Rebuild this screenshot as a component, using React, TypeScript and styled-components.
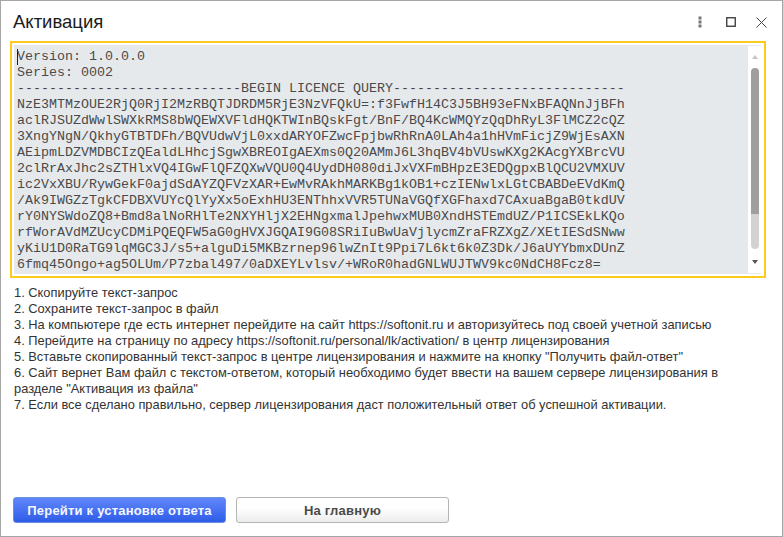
import React from "react";
import styled, { createGlobalStyle } from "styled-components";

const Global = createGlobalStyle`
  html, body { margin: 0; padding: 0; background: #fff; }
  body { font-family: "Liberation Sans", Arial, sans-serif; }
`;

const Window = styled.div`
  box-sizing: border-box;
  width: 783px;
  height: 537px;
  border: 1px solid #a6a6a6;
  background: #fff;
  display: flex;
  flex-direction: column;
`;

const TitleBar = styled.header`
  box-sizing: border-box;
  height: 40px;
  flex: none;
  display: flex;
  align-items: center;
  padding: 2px 5px 0 12px;
`;

const Title = styled.h1`
  flex: 1;
  margin: 0;
  font-size: 18.5px;
  font-weight: 400;
  color: #1a1a1a;
`;

const WindowButton = styled.button`
  width: 31px;
  height: 24px;
  padding: 0;
  border: 0;
  background: none;
  display: flex;
  align-items: center;
  justify-content: center;
`;

const QueryFrame = styled.div`
  box-sizing: border-box;
  margin: 0 16px 0 9px;
  height: 237px;
  flex: none;
  border: 2px solid #fdcb1d;
  padding: 2px 3px 2px 2px;
  display: flex;
  background: #fff;
`;

const QueryBox = styled.div`
  flex: 1;
  min-width: 0;
  display: flex;
  background: #e6e9ec;
  padding: 1px 0;
`;

const QueryText = styled.pre`
  flex: 1;
  min-width: 0;
  margin: 0;
  padding: 3px 0 0 3px;
  font-family: "Liberation Mono", "Courier New", monospace;
  font-size: 13.33px;
  line-height: 16px;
  color: #4a4a4a;
  overflow: hidden;
  position: relative;
`;

const Caret = styled.i`
  position: absolute;
  left: 3px;
  top: 3px;
  width: 1px;
  height: 16px;
  background: #222;
`;

const ScrollBar = styled.div`
  width: 13px;
  flex: none;
  display: flex;
  flex-direction: column;
  align-items: center;
  background: #fff;
`;

const Arrow = styled.div<{ $down?: boolean }>`
  height: 22px;
  flex: none;
  display: flex;
  align-items: center;
  justify-content: center;
  &::before {
    content: "";
    border-left: 3.5px solid transparent;
    border-right: 3.5px solid transparent;
    ${(p) =>
      p.$down
        ? "border-top: 4px solid #555;"
        : "border-bottom: 4px solid #c4c4c4;"}
  }
`;

const Track = styled.div`
  flex: 1;
  width: 8px;
  display: flex;
`;

const Thumb = styled.div`
  width: 8px;
  height: 181px;
  border-radius: 4px;
  background: linear-gradient(#9e9e9e 0%, #9e9e9e 80.5%, #d2d2d2 80.5%, #d2d2d2 100%);
`;

const Steps = styled.ol`
  list-style: none;
  margin: 7px 0 0;
  padding: 0 13px;
  font-size: 12.87px;
  line-height: 16px;
  color: #333;
  flex: 1;
`;

const Footer = styled.footer`
  flex: none;
  display: flex;
  gap: 10px;
  padding: 0 12px 13px;
`;

const ActionButton = styled.button<{ $primary?: boolean }>`
  box-sizing: border-box;
  width: 213px;
  height: 26px;
  padding: 0;
  border-radius: 3px;
  font-family: "Liberation Sans", Arial, sans-serif;
  font-size: 13px;
  font-weight: 700;
  letter-spacing: 0.2px;
  ${(p) =>
    p.$primary
      ? `border: 1px solid #6b8fd8;
         background: linear-gradient(#5f86fb, #2f5de8);
         color: #f4f7ff;`
      : `border: 1px solid #b5b5b5;
         background: linear-gradient(#ffffff 40%, #ececec);
         color: #4a4a4a;`}
`;

const lines = [
  "Version: 1.0.0.0",
  "Series: 0002",
  "----------------------------BEGIN LICENCE QUERY-----------------------------",
  "NzE3MTMzOUE2RjQ0RjI2MzRBQTJDRDM5RjE3NzVFQkU=:f3FwfH14C3J5BH93eFNxBFAQNnJjBFh",
  "aclRJSUZdWwlSWXkRMS8bWQEWXVFldHQKTWInBQskFgt/BnF/BQ4KcWMQYzQqDhRyL3FlMCZ2cQZ",
  "3XngYNgN/QkhyGTBTDFh/BQVUdwVjL0xxdARYOFZwcFpjbwRhRnA0LAh4a1hHVmFicjZ9WjEsAXN",
  "AEipmLDZVMDBCIzQEaldLHhcjSgwXBREOIgAEXms0Q20AMmJ6L3hqBV4bVUswKXg2KAcgYXBrcVU",
  "2clRrAxJhc2sZTHlxVQ4IGwFlQFZQXwVQU0Q4UydDH080diJxVXFmBHpzE3EDQgpxBlQCU2VMXUV",
  "ic2VxXBU/RywGekF0ajdSdAYZQFVzXAR+EwMvRAkhMARKBg1kOB1+czIENwlxLGtCBABDeEVdKmQ",
  "/Ak9IWGZzTgkCFDBXVUYcQlYyXx5oExhHU3ENThhxVVR5TUNaVGQfXGFhaxd7CAxuaBgaB0tkdUV",
  "rY0NYSWdoZQ8+Bmd8alNoRHlTe2NXYHljX2EHNgxmalJpehwxMUB0XndHSTEmdUZ/P1ICSEkLKQo",
  "rfWorAVdMZUcyCDMiPQEQFW5aG0gHVXJGQAI9G08SRiIuBwUaVjlycmZraFRZXgZ/XEtIESdSNww",
  "yKiU1D0RaTG9lqMGC3J/s5+alguDi5MKBzrnep96lwZnIt9Ppi7L6kt6k0Z3Dk/J6aUYYbmxDUnZ",
  "6fmq45Ongo+ag5OLUm/P7zbal497/0aDXEYLvlsv/+WRoR0hadGNLWUJTWV9kc0NdCH8Fcz8=",
];

const steps = [
  "1. Скопируйте текст-запрос",
  "2. Сохраните текст-запрос в файл",
  "3. На компьютере где есть интернет перейдите на сайт https://softonit.ru и авторизуйтесь под своей учетной записью",
  "4. Перейдите на страницу по адресу https://softonit.ru/personal/lk/activation/ в центр лицензирования",
  '5. Вставьте скопированный текст-запрос в центре лицензирования и нажмите на кнопку "Получить файл-ответ"',
  '6. Сайт вернет Вам файл с текстом-ответом, который необходимо будет ввести на вашем сервере лицензирования в разделе "Активация из файла"',
  "7. Если все сделано правильно, сервер лицензирования даст положительный ответ об успешной активации.",
];

export default function App() {
  return (
    <>
      <Global />
      <Window>
        <TitleBar>
          <Title>Активация</Title>
          <WindowButton aria-label="Меню">
            <svg width="4" height="12" viewBox="0 0 4 12">
              <g fill="#777">
                <rect x="0.5" y="0.5" width="3" height="3" />
                <rect x="0.5" y="4.5" width="3" height="3" />
                <rect x="0.5" y="8.5" width="3" height="3" />
              </g>
            </svg>
          </WindowButton>
          <WindowButton aria-label="Развернуть">
            <svg width="10" height="10" viewBox="0 0 10 10">
              <rect x="0.75" y="0.75" width="8.5" height="8.5" fill="none" stroke="#333" strokeWidth="1.3" />
            </svg>
          </WindowButton>
          <WindowButton aria-label="Закрыть">
            <svg width="11" height="11" viewBox="0 0 11 11">
              <path d="M0.5 0.5 10.5 10.5M10.5 0.5 0.5 10.5" stroke="#444" strokeWidth="1" fill="none" />
            </svg>
          </WindowButton>
        </TitleBar>
        <QueryFrame>
          <QueryBox>
            <QueryText>
              <Caret />
              {lines.join("\n")}
            </QueryText>
            <ScrollBar>
              <Arrow />
              <Track>
                <Thumb />
              </Track>
              <Arrow $down />
            </ScrollBar>
          </QueryBox>
        </QueryFrame>
        <Steps>
          {steps.map((s) => (
            <li key={s}>{s}</li>
          ))}
        </Steps>
        <Footer>
          <ActionButton $primary>Перейти к установке ответа</ActionButton>
          <ActionButton>На главную</ActionButton>
        </Footer>
      </Window>
    </>
  );
}
